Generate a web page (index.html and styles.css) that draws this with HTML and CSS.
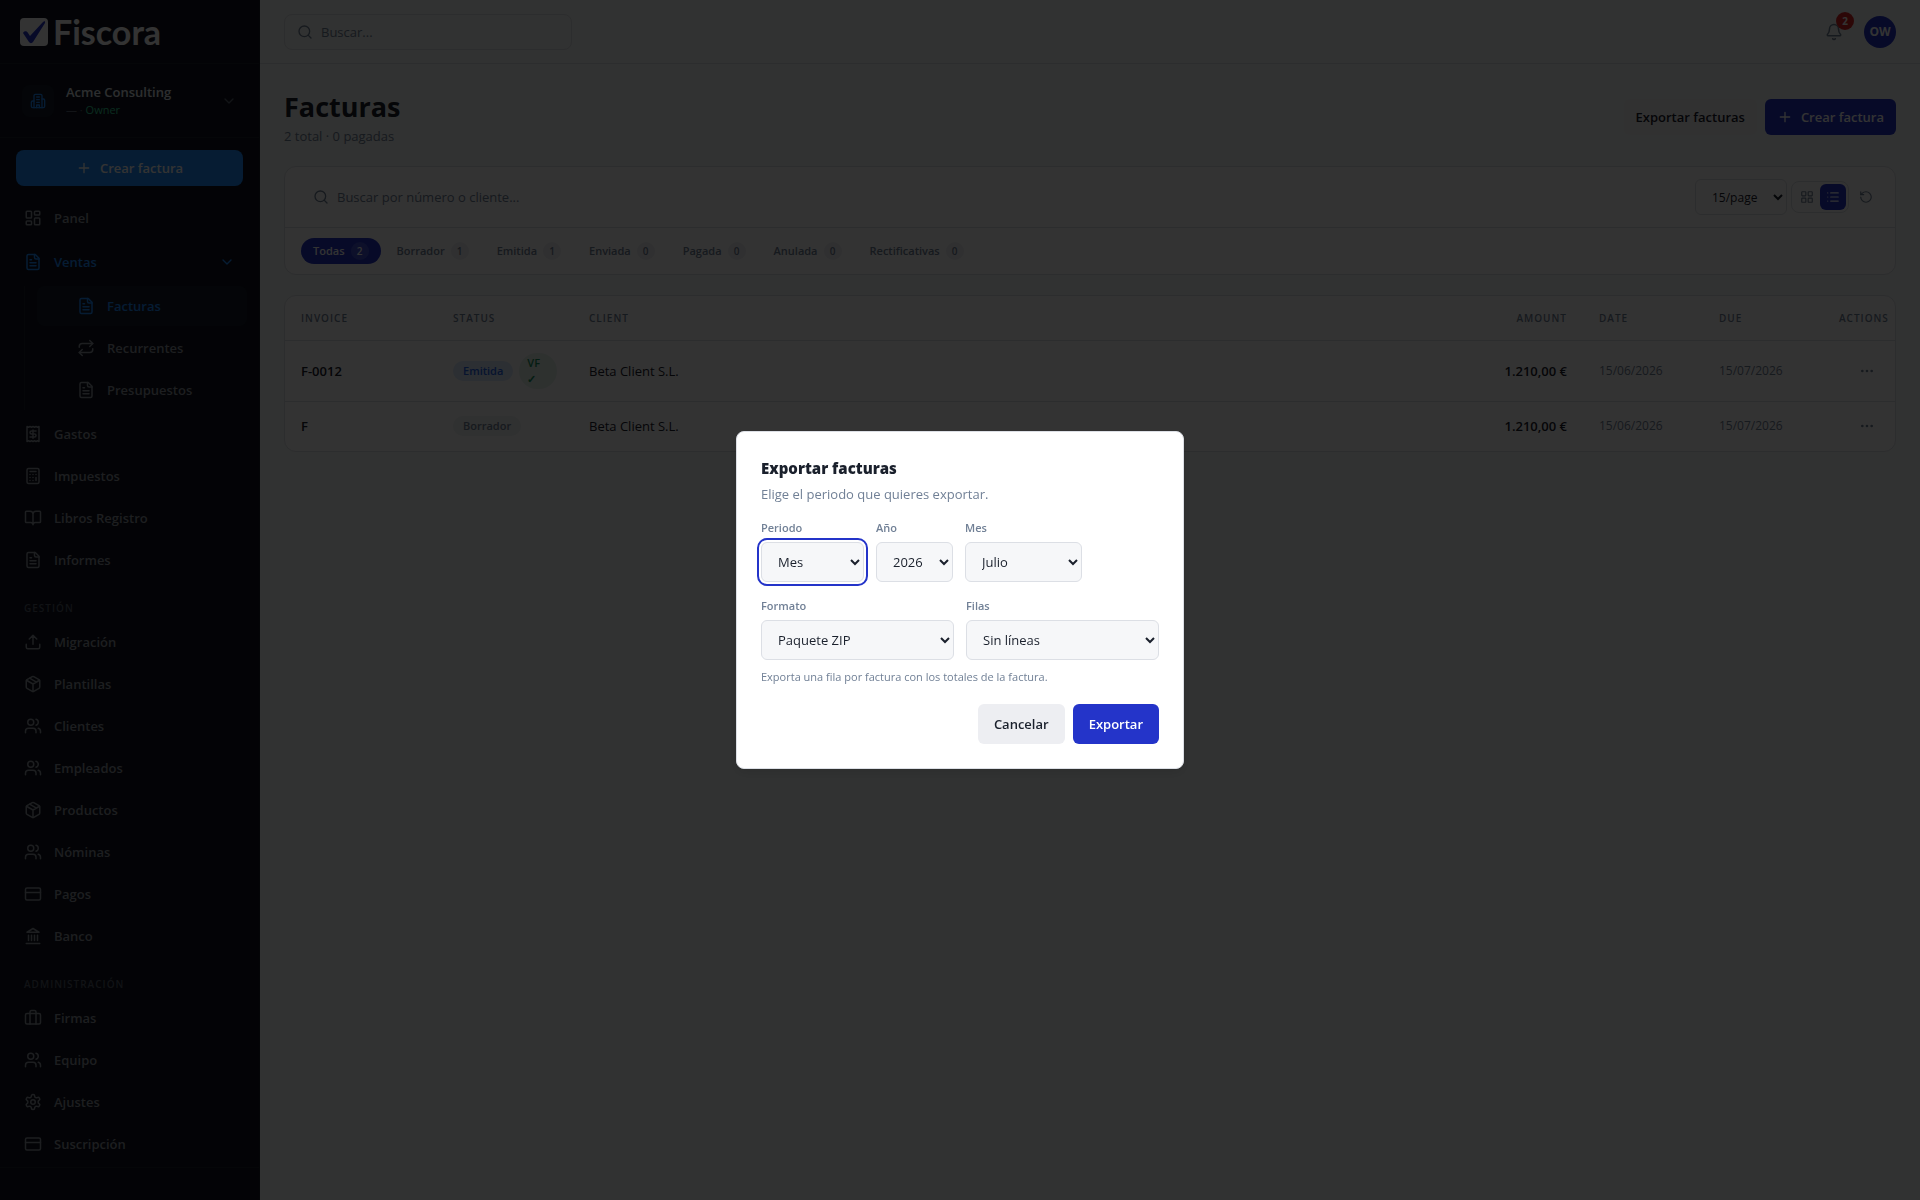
FILE: index.html
```html
<!DOCTYPE html>
<html lang="es">
<head>
<meta charset="utf-8">
<title>Facturas · Fiscora</title>
<link rel="stylesheet" href="styles.css">
</head>
<body>
<svg class="sprite" aria-hidden="true">
  <symbol id="i-search" viewBox="0 0 24 24"><circle cx="11" cy="11" r="8"/><path d="m21 21-4.3-4.3"/></symbol>
  <symbol id="i-plus" viewBox="0 0 24 24"><path d="M5 12h14M12 5v14"/></symbol>
  <symbol id="i-down" viewBox="0 0 24 24"><path d="m6 9 6 6 6-6"/></symbol>
  <symbol id="i-building" viewBox="0 0 24 24"><path d="M6 22V4a2 2 0 0 1 2-2h8a2 2 0 0 1 2 2v18Z"/><path d="M6 12H4a2 2 0 0 0-2 2v6a2 2 0 0 0 2 2h2M18 9h2a2 2 0 0 1 2 2v9a2 2 0 0 1-2 2h-2M10 6h4M10 10h4M10 14h4M10 22v-4h4v4"/></symbol>
  <symbol id="i-panel" viewBox="0 0 24 24"><rect width="7" height="9" x="3" y="3" rx="1"/><rect width="7" height="5" x="14" y="3" rx="1"/><rect width="7" height="9" x="14" y="12" rx="1"/><rect width="7" height="5" x="3" y="16" rx="1"/></symbol>
  <symbol id="i-file" viewBox="0 0 24 24"><path d="M15 2H6a2 2 0 0 0-2 2v16a2 2 0 0 0 2 2h12a2 2 0 0 0 2-2V7Z"/><path d="M14 2v4a2 2 0 0 0 2 2h4M10 9H8M16 13H8M16 17H8"/></symbol>
  <symbol id="i-repeat" viewBox="0 0 24 24"><path d="m17 2 4 4-4 4"/><path d="M3 11v-1a4 4 0 0 1 4-4h14M7 22l-4-4 4-4"/><path d="M21 13v1a4 4 0 0 1-4 4H3"/></symbol>
  <symbol id="i-receipt" viewBox="0 0 24 24"><path d="M4 2v20l2-1 2 1 2-1 2 1 2-1 2 1 2-1 2 1V2l-2 1-2-1-2 1-2-1-2 1-2-1-2 1Z"/><path d="M16 8h-6a2 2 0 1 0 0 4h4a2 2 0 1 1 0 4H8M12 17.5v-11"/></symbol>
  <symbol id="i-calc" viewBox="0 0 24 24"><rect width="16" height="20" x="4" y="2" rx="2"/><path d="M8 6h8M16 14v4M16 10h.01M12 10h.01M8 10h.01M12 14h.01M8 14h.01M12 18h.01M8 18h.01"/></symbol>
  <symbol id="i-book" viewBox="0 0 24 24"><path d="M12 7v14M3 18a1 1 0 0 1-1-1V4a1 1 0 0 1 1-1h5a4 4 0 0 1 4 4 4 4 0 0 1 4-4h5a1 1 0 0 1 1 1v13a1 1 0 0 1-1 1h-6a3 3 0 0 0-3 3 3 3 0 0 0-3-3z"/></symbol>
  <symbol id="i-upload" viewBox="0 0 24 24"><path d="M21 15v4a2 2 0 0 1-2 2H5a2 2 0 0 1-2-2v-4M17 8l-5-5-5 5M12 3v12"/></symbol>
  <symbol id="i-box" viewBox="0 0 24 24"><path d="M11 21.73a2 2 0 0 0 2 0l7-4A2 2 0 0 0 21 16V8a2 2 0 0 0-1-1.73l-7-4a2 2 0 0 0-2 0l-7 4A2 2 0 0 0 3 8v8a2 2 0 0 0 1 1.73z"/><path d="M12 22V12M3.3 7 12 12l8.7-5M7.5 4.27l9 5.15"/></symbol>
  <symbol id="i-users" viewBox="0 0 24 24"><path d="M16 21v-2a4 4 0 0 0-4-4H6a4 4 0 0 0-4 4v2M22 21v-2a4 4 0 0 0-3-3.87M16 3.13a4 4 0 0 1 0 7.75"/><circle cx="9" cy="7" r="4"/></symbol>
  <symbol id="i-card" viewBox="0 0 24 24"><rect width="20" height="16" x="2" y="4" rx="2"/><path d="M2 10h20"/></symbol>
  <symbol id="i-bank" viewBox="0 0 24 24"><path d="M3 22h18M6 18v-7M10 18v-7M14 18v-7M18 18v-7M12 2l8 5H4z"/></symbol>
  <symbol id="i-case" viewBox="0 0 24 24"><path d="M16 20V4a2 2 0 0 0-2-2h-4a2 2 0 0 0-2 2v16"/><rect width="20" height="14" x="2" y="6" rx="2"/></symbol>
  <symbol id="i-gear" viewBox="0 0 24 24"><path d="M12.22 2h-.44a2 2 0 0 0-2 2v.18a2 2 0 0 1-1 1.73l-.43.25a2 2 0 0 1-2 0l-.15-.08a2 2 0 0 0-2.73.73l-.22.38a2 2 0 0 0 .73 2.73l.15.1a2 2 0 0 1 1 1.72v.51a2 2 0 0 1-1 1.74l-.15.09a2 2 0 0 0-.73 2.73l.22.38a2 2 0 0 0 2.73.73l.15-.08a2 2 0 0 1 2 0l.43.25a2 2 0 0 1 1 1.73V20a2 2 0 0 0 2 2h.44a2 2 0 0 0 2-2v-.18a2 2 0 0 1 1-1.73l.43-.25a2 2 0 0 1 2 0l.15.08a2 2 0 0 0 2.73-.73l.22-.39a2 2 0 0 0-.73-2.73l-.15-.08a2 2 0 0 1-1-1.74v-.5a2 2 0 0 1 1-1.74l.15-.09a2 2 0 0 0 .73-2.73l-.22-.38a2 2 0 0 0-2.73-.73l-.15.08a2 2 0 0 1-2 0l-.43-.25a2 2 0 0 1-1-1.73V4a2 2 0 0 0-2-2z"/><circle cx="12" cy="12" r="3"/></symbol>
  <symbol id="i-bell" viewBox="0 0 24 24"><path d="M10.27 21a2 2 0 0 0 3.46 0M3.26 15.33A1 1 0 0 0 4 17h16a1 1 0 0 0 .74-1.67C19.41 13.96 18 12.5 18 8A6 6 0 0 0 6 8c0 4.5-1.41 5.96-2.74 7.33"/></symbol>
  <symbol id="i-grid" viewBox="0 0 24 24"><rect width="7" height="7" x="3" y="3" rx="1"/><rect width="7" height="7" x="14" y="3" rx="1"/><rect width="7" height="7" x="14" y="14" rx="1"/><rect width="7" height="7" x="3" y="14" rx="1"/></symbol>
  <symbol id="i-list" viewBox="0 0 24 24"><path d="M3 5h.01M3 12h.01M3 19h.01M8 5h13M8 12h13M8 19h13"/></symbol>
  <symbol id="i-reset" viewBox="0 0 24 24"><path d="M3 12a9 9 0 1 0 9-9 9.75 9.75 0 0 0-6.74 2.74L3 8"/><path d="M3 3v5h5"/></symbol>
  <symbol id="i-dots" viewBox="0 0 24 24"><circle cx="12" cy="12" r="1"/><circle cx="19" cy="12" r="1"/><circle cx="5" cy="12" r="1"/></symbol>
</svg>

<div class="app">
  <aside class="sidebar">
    <a class="brand" href="#">
      <svg class="brand-mark" viewBox="0 0 28 28"><rect width="28" height="28" rx="4" fill="#fff"/><path d="M3 15c1-2.500 4-2.500 5 0l2 3L22.500 4.500c2-2 3-1.500 2.500.500L13 24c-1 1.500-3 1.500-4 0z" fill="#2434c9"/></svg>
      <span>Fiscora</span>
    </a>
    <button class="org" type="button">
      <span class="org-icon"><svg class="icon s16"><use href="#i-building"/></svg></span>
      <span class="org-text"><strong>Acme Consulting</strong><small>— · <em>Owner</em></small></span>
      <svg class="icon s16"><use href="#i-down"/></svg>
    </button>
    <div class="create"><button class="create-btn" type="button"><svg class="icon s16"><use href="#i-plus"/></svg>Crear factura</button></div>
    <nav class="nav">
      <a href="#"><svg class="icon"><use href="#i-panel"/></svg>Panel</a>
      <div class="nav-group">
        <a class="current" href="#"><svg class="icon"><use href="#i-file"/></svg>Ventas<svg class="icon s16 caret"><use href="#i-down"/></svg></a>
        <div class="subnav">
          <a class="current selected" href="#"><svg class="icon"><use href="#i-file"/></svg>Facturas</a>
          <a href="#"><svg class="icon"><use href="#i-repeat"/></svg>Recurrentes</a>
          <a href="#"><svg class="icon"><use href="#i-file"/></svg>Presupuestos</a>
        </div>
      </div>
      <a href="#"><svg class="icon"><use href="#i-receipt"/></svg>Gastos</a>
      <a href="#"><svg class="icon"><use href="#i-calc"/></svg>Impuestos</a>
      <a href="#"><svg class="icon"><use href="#i-book"/></svg>Libros Registro</a>
      <a href="#"><svg class="icon"><use href="#i-file"/></svg>Informes</a>
      <h2>Gestión</h2>
      <a href="#"><svg class="icon"><use href="#i-upload"/></svg>Migración</a>
      <a href="#"><svg class="icon"><use href="#i-box"/></svg>Plantillas</a>
      <a href="#"><svg class="icon"><use href="#i-users"/></svg>Clientes</a>
      <a href="#"><svg class="icon"><use href="#i-users"/></svg>Empleados</a>
      <a href="#"><svg class="icon"><use href="#i-box"/></svg>Productos</a>
      <a href="#"><svg class="icon"><use href="#i-users"/></svg>Nóminas</a>
      <a href="#"><svg class="icon"><use href="#i-card"/></svg>Pagos</a>
      <a href="#"><svg class="icon"><use href="#i-bank"/></svg>Banco</a>
      <h2>Administración</h2>
      <a href="#"><svg class="icon"><use href="#i-case"/></svg>Firmas</a>
      <a href="#"><svg class="icon"><use href="#i-users"/></svg>Equipo</a>
      <a href="#"><svg class="icon"><use href="#i-gear"/></svg>Ajustes</a>
      <a href="#"><svg class="icon"><use href="#i-card"/></svg>Suscripción</a>
    </nav>
    <div class="sidebar-foot"></div>
  </aside>

  <div class="main">
    <header class="topbar">
      <label class="search top-search"><svg class="icon s16"><use href="#i-search"/></svg><input type="search" placeholder="Buscar..." aria-label="Buscar"></label>
      <div class="user-tools">
        <button class="bell" type="button" aria-label="Notificaciones"><svg class="icon"><use href="#i-bell"/></svg><span class="bell-count">2</span></button>
        <button class="avatar" type="button">OW</button>
      </div>
    </header>

    <main class="content">
      <div class="page-head">
        <div>
          <h1>Facturas</h1>
          <p>2 total · 0 pagadas</p>
        </div>
        <div class="page-actions">
          <button class="btn ghost" type="button">Exportar facturas</button>
          <button class="btn primary" type="button"><svg class="icon s16"><use href="#i-plus"/></svg>Crear factura</button>
        </div>
      </div>

      <section class="card filters">
        <div class="toolbar">
          <label class="search table-search"><svg class="icon s16"><use href="#i-search"/></svg><input type="search" placeholder="Buscar por número o cliente..." aria-label="Buscar facturas"></label>
          <select class="page-size" aria-label="Por página"><option>15/page</option></select>
          <div class="views">
            <button type="button" aria-label="Cuadrícula"><svg class="icon s14"><use href="#i-grid"/></svg></button>
            <button class="on" type="button" aria-label="Lista"><svg class="icon s14"><use href="#i-list"/></svg></button>
          </div>
          <button class="reset" type="button" aria-label="Restablecer"><svg class="icon s14"><use href="#i-reset"/></svg></button>
        </div>
        <div class="chips">
          <button class="chip on" type="button">Todas<span>2</span></button>
          <button class="chip" type="button">Borrador<span>1</span></button>
          <button class="chip" type="button">Emitida<span>1</span></button>
          <button class="chip" type="button">Enviada<span>0</span></button>
          <button class="chip" type="button">Pagada<span>0</span></button>
          <button class="chip" type="button">Anulada<span>0</span></button>
          <button class="chip" type="button">Rectificativas<span>0</span></button>
        </div>
      </section>

      <section class="card">
        <table class="invoices">
          <colgroup><col class="c-invoice"><col class="c-status"><col><col class="c-amount"><col class="c-date"><col class="c-date"><col class="c-actions"></colgroup>
          <thead><tr><th>Invoice</th><th>Status</th><th>Client</th><th class="num">Amount</th><th>Date</th><th>Due</th><th>Actions</th></tr></thead>
          <tbody>
            <tr>
              <td class="strong">F-0012</td>
              <td><div class="badges"><span class="badge issued">Emitida</span><span class="badge verified">VF ✓</span></div></td>
              <td>Beta Client S.L.</td><td class="strong num">1.210,00 €</td><td class="date">15/06/2026</td><td class="date">15/07/2026</td>
              <td class="num"><button class="more" type="button" aria-label="Acciones"><svg class="icon s16"><use href="#i-dots"/></svg></button></td>
            </tr>
            <tr>
              <td class="strong">F</td>
              <td><div class="badges"><span class="badge draft">Borrador</span></div></td>
              <td>Beta Client S.L.</td><td class="strong num">1.210,00 €</td><td class="date">15/06/2026</td><td class="date">15/07/2026</td>
              <td class="num"><button class="more" type="button" aria-label="Acciones"><svg class="icon s16"><use href="#i-dots"/></svg></button></td>
            </tr>
          </tbody>
        </table>
      </section>
    </main>
  </div>
</div>

<div class="overlay">
  <form class="modal" role="dialog" aria-modal="true" aria-labelledby="export-title">
    <h2 id="export-title">Exportar facturas</h2>
    <p class="lead">Elige el periodo que quieres exportar.</p>
    <div class="fields">
      <div class="field period"><label for="period">Periodo</label><select class="focused" id="period"><option>Mes</option></select></div>
      <div class="field year"><label for="year">Año</label><select id="year"><option>2026</option></select></div>
      <div class="field month"><label for="month">Mes</label><select id="month"><option>Julio</option></select></div>
    </div>
    <div class="fields halves">
      <div class="field"><label for="format">Formato</label><select id="format"><option>Paquete ZIP</option></select></div>
      <div class="field"><label for="rows">Filas</label><select id="rows"><option>Sin líneas</option></select></div>
    </div>
    <p class="hint">Exporta una fila por factura con los totales de la factura.</p>
    <div class="modal-actions">
      <button class="btn neutral" type="button">Cancelar</button>
      <button class="btn primary" type="submit">Exportar</button>
    </div>
  </form>
</div>
</body>
</html>
```
FILE: styles.css
```css
:root {
  --primary: #2434c9;
  --accent: #1e8cff;
  --ink: #1a202c;
  --muted: #718096;
  --line: #dcdfe5;
}
* { box-sizing: border-box; }
body {
  margin: 0;
  background: #f4f9f7;
  color: var(--ink);
  font: 13px/20px "Open Sans", "Noto Sans", sans-serif;
}
button, input, select { font: inherit; color: inherit; }
button { border: 0; padding: 0; background: none; }
h1, h2, p { margin: 0; }
a { color: inherit; text-decoration: none; }
.sprite { display: none; }
.icon {
  width: 18px;
  height: 18px;
  flex: none;
  fill: none;
  stroke: currentColor;
  stroke-width: 2;
  stroke-linecap: round;
  stroke-linejoin: round;
}
.s16 { width: 16px; height: 16px; }
.s14 { width: 14px; height: 14px; }

.app { display: flex; min-height: 100vh; }

/* Sidebar */
.sidebar {
  display: flex;
  flex-direction: column;
  flex: none;
  width: 260px;
  border-right: 1px solid #161b26;
  background: #0f131e;
  color: #8f959e;
}
.brand {
  display: flex;
  align-items: center;
  gap: 5px;
  height: 64px;
  padding: 0 20px;
  border-bottom: 1px solid #1a202c;
  color: #fff;
  font: 700 34px/40px Lato, sans-serif;
}
.brand-mark { width: 28px; height: 28px; }
.org {
  display: flex;
  align-items: center;
  gap: 12px;
  height: 74px;
  padding: 0 22px;
  border-bottom: 1px solid #1a202c;
  color: #5b6472;
  text-align: left;
}
.org-icon {
  display: grid;
  place-items: center;
  width: 32px;
  height: 32px;
  border-radius: 8px;
  background: #161c2a;
  color: var(--accent);
}
.org-text { display: flex; flex-direction: column; flex: 1; padding-bottom: 2px; }
.org-text strong { color: #dfe3e8; font-weight: 600; line-height: 20px; }
.org-text small { font-size: 11px; line-height: 16px; }
.org-text em { color: #34d399; font-style: normal; }
.create { padding: 12px 16px; }
.create-btn {
  display: flex;
  align-items: center;
  justify-content: center;
  gap: 8px;
  width: 100%;
  height: 36px;
  border-radius: 8px;
  background: var(--accent);
  color: #fff;
  font-weight: 600;
}
.nav {
  display: flex;
  flex-direction: column;
  flex: 1;
  gap: 2px;
  padding: 0 12px;
}
.nav a {
  display: flex;
  align-items: center;
  gap: 12px;
  height: 40px;
  padding: 0 12px;
  border-radius: 8px;
  font-weight: 600;
}
.nav a.current { color: var(--accent); }
.nav a.selected { background: #171c2a; }
.nav .caret { margin-left: auto; }
.nav-group { margin: 2px 0; }
.nav h2 {
  padding: 19px 12px 5px;
  color: #555c6a;
  font-size: 10px;
  font-weight: 600;
  line-height: 14px;
  letter-spacing: 1px;
  text-transform: uppercase;
}
.subnav {
  display: flex;
  flex-direction: column;
  gap: 2px;
  margin: 4px 0 0 12px;
  padding-left: 12px;
  border-left: 1px solid #1a202c;
}
.subnav a { padding-left: 40px; }
.sidebar-foot { height: 33px; border-top: 1px solid #1a202c; }

/* Top bar */
.main { flex: 1; min-width: 0; }
.topbar {
  display: flex;
  align-items: center;
  justify-content: space-between;
  height: 64px;
  padding: 0 24px;
  border-bottom: 1px solid var(--line);
}
.search { display: flex; align-items: center; gap: 8px; color: var(--muted); }
.search input {
  flex: 1;
  min-width: 0;
  padding: 0;
  border: 0;
  outline: 0;
  background: none;
}
.search input::placeholder { color: var(--muted); opacity: 1; }
.top-search {
  width: 288px;
  height: 36px;
  padding: 0 12px;
  border: 1px solid var(--line);
  border-radius: 8px;
}
.user-tools { display: flex; align-items: center; gap: 12px; }
.bell {
  position: relative;
  display: grid;
  place-items: center;
  width: 36px;
  height: 36px;
  color: var(--muted);
}
.bell-count {
  position: absolute;
  top: -2px;
  right: -2px;
  width: 18px;
  height: 18px;
  border-radius: 9px;
  background: #dc2626;
  color: #fff;
  font-size: 10px;
  font-weight: 700;
  line-height: 18px;
  text-align: center;
}
.avatar {
  width: 32px;
  height: 32px;
  border-radius: 50%;
  background: var(--primary);
  color: #fff;
  font-size: 12px;
  font-weight: 700;
}

/* Page */
.content { display: flex; flex-direction: column; gap: 20px; padding: 24px; }
.page-head { display: flex; align-items: center; justify-content: space-between; }
.page-head h1 { font-size: 27px; line-height: 38px; }
.page-head p { color: var(--muted); }
.page-actions, .modal-actions { display: flex; gap: 8px; }
.btn {
  display: flex;
  align-items: center;
  justify-content: center;
  gap: 8px;
  height: 36px;
  padding: 0 12px;
  border-radius: 6px;
  font-weight: 600;
}
.btn.ghost { background: #f6f4f6; }
.btn.neutral { background: #edeef2; }
.btn.primary { background: var(--primary); color: #fff; }
.card {
  overflow: hidden;
  border: 1px solid var(--line);
  border-radius: 12px;
  background: #fff;
}
.toolbar {
  display: flex;
  align-items: center;
  height: 61px;
  padding: 0 16px;
  border-bottom: 1px solid var(--line);
}
.table-search { flex: 1; padding: 0 12px; }
.page-size {
  width: 92px;
  height: 36px;
  margin-right: 4px;
  padding: 0 0 0 12px;
  border: 1px solid var(--line);
  border-radius: 6px;
  background: #fff;
  font-size: 12px;
}
.views {
  display: flex;
  padding: 2px;
  border: 1px solid var(--line);
  border-radius: 8px;
}
.views button, .reset {
  display: grid;
  place-items: center;
  width: 26px;
  height: 26px;
  border-radius: 6px;
  color: var(--muted);
}
.views button.on { background: var(--primary); color: #fff; }
.reset { margin-left: 4px; }
.chips { display: flex; gap: 4px; padding: 10px 16px; }
.chip {
  display: flex;
  align-items: center;
  gap: 6px;
  height: 26px;
  padding: 0 12px;
  border-radius: 13px;
  color: var(--muted);
  font-size: 11px;
  font-weight: 600;
}
.chip span {
  width: 18px;
  border-radius: 9px;
  background: #f0f1f4;
  font-size: 10px;
  line-height: 18px;
}
.chip.on { background: var(--primary); color: #fff; }
.chip.on span { background: #4351d1; }

/* Invoice table */
.invoices { width: 100%; border-collapse: collapse; table-layout: fixed; }
.c-invoice { width: 152px; }
.c-status { width: 136px; }
.c-amount { width: 144px; }
.c-date { width: 120px; }
.c-actions { width: 72px; }
.invoices th {
  height: 44px;
  padding: 0 16px;
  color: var(--muted);
  font-size: 10px;
  font-weight: 600;
  letter-spacing: 1px;
  text-align: left;
  text-transform: uppercase;
}
.invoices tbody tr { border-top: 1px solid var(--line); }
.invoices td { padding: 12px 16px; height: 50px; }
.invoices .num { text-align: right; }
.strong { font-weight: 600; }
.invoices .date { color: var(--muted); font-size: 12px; }
.badges { display: flex; align-items: center; gap: 6px; }
.badge {
  padding: 2px 10px;
  border-radius: 18px;
  font-size: 11px;
  font-weight: 600;
  line-height: 16px;
}
.badge.issued { background: #dbeafe; color: #2563eb; }
.badge.verified { padding: 2px 8px; background: #e6f2ec; color: #15915c; }
.badge.draft { background: #eef2f2; color: var(--muted); }
.more { display: inline-grid; place-items: center; width: 24px; height: 24px; vertical-align: middle; color: var(--muted); }

/* Export dialog */
.overlay {
  position: fixed;
  inset: 0;
  display: flex;
  align-items: center;
  justify-content: center;
  background: rgba(0, 0, 0, .8);
}
.modal {
  width: 448px;
  padding: 24px;
  border: 1px solid var(--line);
  border-radius: 8px;
  background: #fff;
  box-shadow: 0 4px 12px rgba(0, 0, 0, .1);
}
.modal h2 { font-size: 15px; font-weight: 800; line-height: 24px; }
.lead { margin: 4px 0 16px; color: var(--muted); line-height: 20px; }
.fields { display: flex; gap: 12px; margin-bottom: 16px; }
.field { display: flex; flex-direction: column; gap: 6px; }
.field label { color: var(--muted); font-size: 11px; font-weight: 600; line-height: 16px; }
.field select {
  width: 100%;
  height: 40px;
  padding: 0 0 0 12px;
  border: 1px solid var(--line);
  border-radius: 6px;
  background: #f6f7f9;
}
.field select.focused { outline: 2px solid var(--primary); outline-offset: 2px; }
.period { width: 103px; }
.year { width: 77px; }
.month { width: 117px; }
.halves { margin-bottom: 8px; }
.halves .field { flex: 1; }
.hint { margin-bottom: 18px; color: var(--muted); font-size: 11px; line-height: 18px; }
.modal-actions { justify-content: flex-end; }
.modal-actions .btn { height: 40px; padding: 0 16px; }
```
